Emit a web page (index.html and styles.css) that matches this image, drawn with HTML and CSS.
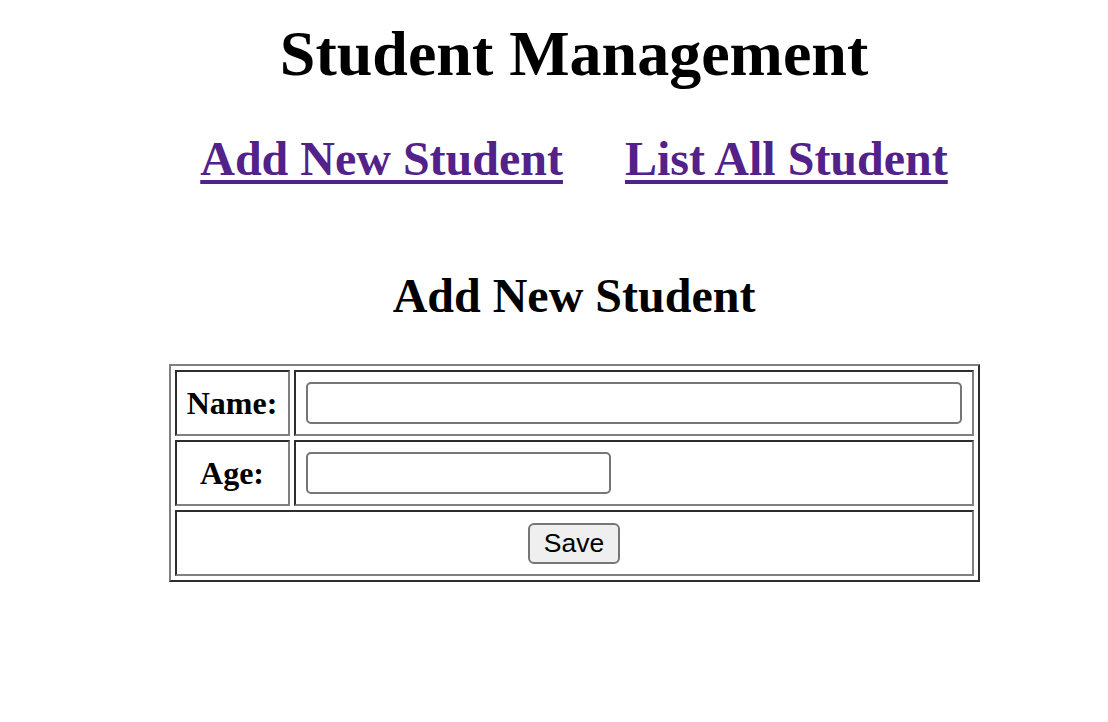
FILE: index.html
```html
<!DOCTYPE html>
<html lang="en">
<head>
<meta charset="utf-8">
<title>Student Management</title>
<link rel="stylesheet" href="styles.css">
</head>
<body>
<div class="page">
  <h1 class="title">Student Management</h1>
  <nav class="nav">
    <a class="nav-link" href="#add">Add New Student</a>
    <a class="nav-link" href="#list">List All Student</a>
  </nav>
  <h2 class="section-title">Add New Student</h2>
  <form class="student-form">
    <table class="form-table">
      <tr>
        <th class="cell label">Name:</th>
        <td class="cell"><input class="field field-name" type="text" name="name"></td>
      </tr>
      <tr>
        <th class="cell label">Age:</th>
        <td class="cell"><input class="field field-age" type="text" name="age"></td>
      </tr>
      <tr>
        <td class="cell actions" colspan="2"><button class="save-btn" type="submit">Save</button></td>
      </tr>
    </table>
  </form>
</div>
</body>
</html>
```

FILE: styles.css
```css
html, body {
  margin: 0;
  padding: 0;
  background: #ffffff;
}

body {
  font-family: "Liberation Serif", "Times New Roman", serif;
  color: #000000;
}

.page {
  padding-left: 40px;
  display: flex;
  flex-direction: column;
  align-items: center;
}

.title {
  margin: 17px 0 0;
  font-size: 64px;
  line-height: 74px;
  font-weight: bold;
  text-align: center;
}

.nav {
  margin-top: 40px;
  display: flex;
  justify-content: center;
  gap: 62px;
  font-size: 48px;
  line-height: 56px;
  font-weight: bold;
}

.nav-link {
  color: #52218a;
  text-decoration: underline;
  text-decoration-thickness: 4px;
  text-underline-offset: 5px;
}

.section-title {
  margin: 81px 0 0;
  font-size: 48px;
  line-height: 56px;
  font-weight: bold;
  text-align: center;
}

.student-form {
  margin-top: 40px;
}

.form-table {
  width: 811px;
  border-collapse: separate;
  border-spacing: 4px;
  border-style: solid;
  border-width: 2px;
  border-color: #808080 #2d2d2d #2d2d2d #808080;
}

.cell {
  padding: 10px;
  border-style: solid;
  border-width: 2px;
  border-color: #2d2d2d #808080 #808080 #2d2d2d;
  vertical-align: middle;
}

.label {
  width: 91px;
  font-size: 32px;
  font-weight: bold;
  text-align: center;
  white-space: nowrap;
}

.field {
  display: block;
  box-sizing: border-box;
  height: 42px;
  margin: 0;
  padding: 2px 6px;
  border: 2px solid #767676;
  border-radius: 5px;
  background: #ffffff;
  font-family: "Liberation Sans", Arial, sans-serif;
  font-size: 26px;
}

.field-name {
  width: 100%;
}

.field-age {
  width: 305px;
}

.actions {
  text-align: center;
  height: 42px;
}

.save-btn {
  box-sizing: border-box;
  width: 92px;
  height: 41px;
  margin: 0;
  padding: 0;
  border: 2px solid #767676;
  border-radius: 6px;
  background: #efefef;
  color: #000000;
  font-family: "Liberation Sans", Arial, sans-serif;
  font-size: 26.5px;
  vertical-align: middle;
}
```
